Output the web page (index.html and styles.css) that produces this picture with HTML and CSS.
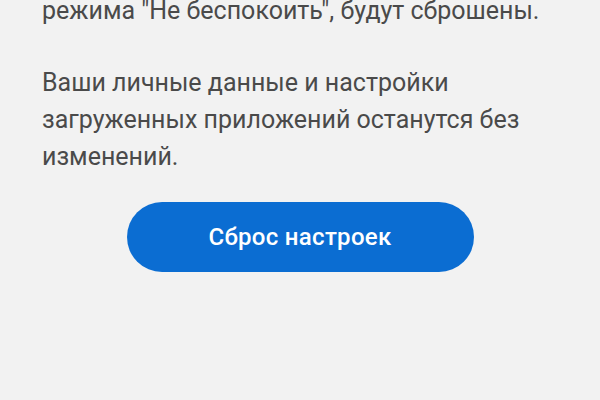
FILE: index.html
```html
<!DOCTYPE html>
<html lang="ru">
<head>
<meta charset="utf-8">
<link rel="stylesheet" href="styles.css">
</head>
<body>
<main class="screen">
  <div class="content">
    <p class="para">режима "Не беспокоить", будут сброшены.</p>
    <p class="para">Ваши личные данные и настройки загруженных приложений останутся без изменений.</p>
  </div>
  <div class="actions">
    <button class="reset-btn">Сброс настроек</button>
  </div>
</main>
</body>
</html>
```
FILE: styles.css
```css
html, body {
  margin: 0;
  padding: 0;
  background: #f2f2f2;
}
.screen {
  width: 600px;
  height: 400px;
  overflow: hidden;
  box-sizing: border-box;
  padding: 0 42px;
  font-family: Roboto, "Noto Sans", sans-serif;
}
.content {
  margin-top: -8px;
}
.para {
  margin: 0 0 35px 0;
  font-size: 25px;
  line-height: 37px;
  color: #4a4a4a;
  width: 516px;
}
.para:last-child {
  margin-bottom: 0;
}
.actions {
  display: flex;
  justify-content: center;
  margin-top: 27px;
}
.reset-btn {
  width: 347px;
  height: 70px;
  border: none;
  border-radius: 35px;
  background: #0b6dd2;
  color: #ffffff;
  font-family: Roboto, "Noto Sans", sans-serif;
  font-size: 24px;
  font-weight: 500;
  letter-spacing: 0.3px;
  padding: 0;
}
```
